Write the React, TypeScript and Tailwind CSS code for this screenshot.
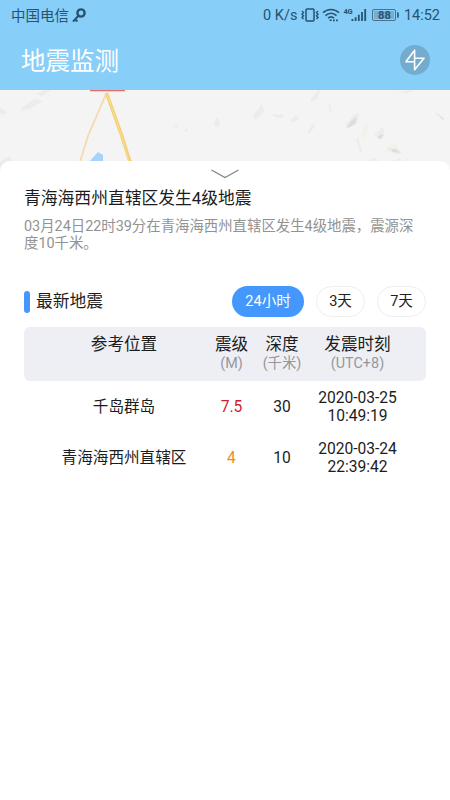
import React from "react";

interface Quake {
  place: string;
  magnitude: string;
  magnitudeClass: string;
  depth: string;
  date: string;
  time: string;
}

const quakes: Quake[] = [
  {
    place: "千岛群岛",
    magnitude: "7.5",
    magnitudeClass: "text-[#d0202c]",
    depth: "30",
    date: "2020-03-25",
    time: "10:49:19",
  },
  {
    place: "青海海西州直辖区",
    magnitude: "4",
    magnitudeClass: "text-[#f08a24]",
    depth: "10",
    date: "2020-03-24",
    time: "22:39:42",
  },
];

const columns = [
  { label: "参考位置", unit: "" },
  { label: "震级", unit: "(M)" },
  { label: "深度", unit: "(千米)" },
  { label: "发震时刻", unit: "(UTC+8)" },
];

const GRID = "grid grid-cols-[164px_51px_50px_101px] px-[18px] text-center";

const StatusBar: React.FC = () => (
  <div className="flex h-8 items-center pl-[11px] pr-[10px] text-[14.5px] leading-none text-[#27536f]">
    <span className="pt-[2px]">中国电信</span>
    {/* Key */}
    <svg className="ml-[3px] mb-[2px]" width="14" height="15" viewBox="0 0 14 15" fill="none" stroke="currentColor">
      <circle cx="9" cy="5" r="3.6" strokeWidth="2.4" />
      <path d="M6.5 7.8L1 13.6M3 11.2l2.4 2.2" strokeWidth="2" />
    </svg>
    <span className="ml-auto pt-px">0 K/s</span>
    {/* Vibrate */}
    <svg className="ml-[4px] mb-[2px]" width="18" height="14" viewBox="0 0 18 14" fill="none" stroke="currentColor">
      <rect x="5" y="1" width="8" height="12" rx="1" strokeWidth="1.5" />
      <path d="M1 3l1.5 1.6L1 6.2l1.5 1.6L1 9.4 2.5 11M17 3l-1.5 1.6L17 6.2l-1.5 1.6L17 9.4 15.5 11" strokeWidth="1.4" />
    </svg>
    {/* Wi-Fi */}
    <svg className="ml-[3px] mb-[2px]" width="18" height="14" viewBox="0 0 18 14" fill="none" stroke="currentColor" strokeWidth="1.6">
      <path d="M1 4.8c4.5-4.4 11.5-4.4 16 0M3.5 7.6c3.2-3.1 7.8-3.1 11 0M6 10.2c1.8-1.6 4.2-1.6 6 0" />
      <path d="M7.5 12.2h2.2M11 12.4h1.800M14 12.4h1.800" />
    </svg>
    {/* 4G signal */}
    <span className="ml-[3px] mb-[9px] w-[9px] text-[7.5px] font-bold tracking-tight">4G</span>
    <svg className="-ml-px mb-[2px]" width="16" height="14" viewBox="0 0 16 14" fill="currentColor">
      <path d="M.5 11h1.8v2H.5zM3.7 9.2h1.8V13H3.7zM6.9 6.8h1.8V13H6.9zM10.1 4h1.8v9h-1.8zM13.3 1h1.8v12h-1.8z" />
    </svg>
    {/* Battery */}
    <div className="ml-[5px] mb-[2px] flex h-[12px] w-[24px] items-center justify-center rounded-[2px] border border-[#47718c] p-px">
      <span className="flex h-full w-full items-center justify-center bg-[#76aecf] text-[11px] font-bold">88</span>
    </div>
    <span className="ml-px mb-[2px] h-[6px] w-[1.5px] rounded-r-sm bg-[#3d6883]" />
    <span className="ml-[5px] pt-px">14:52</span>
  </div>
);

const Header: React.FC = () => (
  <header className="h-[90px] bg-[#87cef8]">
    <StatusBar />
    <div className="flex h-[56px] items-center justify-between pl-[21px] pr-5">
      <h1 className="pt-[5px] text-[24.5px] leading-none text-white">地震监测</h1>
      <button className="flex h-[30px] w-[30px] items-center justify-center rounded-full bg-[#74acce]">
        <svg width="20" height="22" viewBox="0 0 20 22" fill="none" stroke="#fff" strokeWidth="1.6" strokeLinejoin="round">
          <path d="M9.6 12.8H.9L9.6 1.2v19.6L19 9.2H9.6" />
        </svg>
      </button>
    </div>
  </header>
);

const MapStrip: React.FC = () => (
  <svg className="block h-[86px] w-full bg-[#f4f4f4]" viewBox="0 0 450 86">
    {/* Terrain */}
    <g fill="#e9e9e9" opacity="0.7">
      <path d="M21 18l14-9 8 2-12 7-9 3zM36 4l9-4h6l-9 6zM0 18l7 4-3 3-4-2zM0 72l9-6 3 4-8 8-4 2z" />
      <path d="M172 37l4-3 3 4zM184 41l3-3 1 4zM213 35l4-8 3 6-2 4zM253 26l6-8 3-4 2 7-8 9zM271 24l13 1-2 3-7-1zM290 31l6-6 3 4-6 3zM308 41l5-7 2 2-6 8zM311 9l7-9h2l-2 9-7 3z" />
      <path d="M329 10l2 10 4 4-6-4zM346 34l8-9 5-2-2 10-10 6zM358 47l4 14-2 1-4-12zM374 45l8-8 3 5-7 5zM386 57l12 1 4 6-9-1zM366 72l8-4 6 4-7 4zM389 72l12-4-2 6zM399 2l14-2-2 2-7 1z" />
    </g>
    <g fill="#dedede">
      <path d="M347 37l5-7 5-3-2 7-7 4zM377 48l4-4 3 1-3 4zM388 59l8 0 4 4-7-1zM434 21l10 8-1 1z" />
    </g>
    <path d="M386 62l10-8M367 32l-4 16M409 70l-8 4" stroke="#f3f0df" strokeWidth="5" opacity="0.5" />
    {/* Lake */}
    <path d="M88 73l10-11 5 3v8z" fill="#a5d3fa" />
    {/* Roads */}
    <path d="M106.500 3L88 46l-8 26" fill="none" stroke="#f2dcab" strokeWidth="1.8" />
    <path d="M106.500 3l15 42 8.500 27" fill="none" stroke="#f2cf73" strokeWidth="3.4" />
    <path d="M107 4l14 40 8 28" fill="none" stroke="#f8dd8b" strokeWidth="1.200" />
    <path d="M90 .500h35" stroke="#e46f67" strokeWidth="1.500" />
  </svg>
);

const RangeTabs: React.FC = () => (
  <div className="flex gap-3 text-[14.5px] leading-none">
    <button className="h-[31px] w-[72px] rounded-full bg-[#4397fd] pt-[2px] text-white">24小时</button>
    <button className="h-[31px] w-[49px] rounded-full border border-[#eeeeee] pt-[2px] text-[#222]">3天</button>
    <button className="h-[31px] w-[49px] rounded-full border border-[#eeeeee] pt-[2px] text-[#222]">7天</button>
  </div>
);

const QuakeTable: React.FC = () => (
  <div className="mt-[10px]">
    <div className={`${GRID} h-[54px] rounded-md bg-[#eeeff4] pt-[8px]`}>
      {columns.map((column) => (
        <div key={column.label} className="whitespace-nowrap">
          <div className="text-[16.6px] leading-[19px] text-[#1c1c1e]">{column.label}</div>
          <div className="text-[14.4px] leading-[19px] text-[#97979b]">{column.unit}</div>
        </div>
      ))}
    </div>
    {quakes.map((quake) => (
      <div key={quake.time} className={`${GRID} h-[51px] items-center pt-[2px] text-[15.6px] leading-[17.5px] text-[#1c1c1e]`}>
        <div className="whitespace-nowrap">{quake.place}</div>
        <div className={quake.magnitudeClass}>{quake.magnitude}</div>
        <div>{quake.depth}</div>
        <div>
          {quake.date}
          <br />
          {quake.time}
        </div>
      </div>
    ))}
  </div>
);

const App: React.FC = () => {
  return (
    <div className="flex h-[800px] w-[450px] flex-col overflow-hidden bg-white font-['Roboto','Noto_Sans_CJK_SC',sans-serif]">
      <Header />
      <MapStrip />
      <main className="relative -mt-[15px] flex-1 rounded-t-[10px] bg-white px-6">
        <svg className="mx-auto mt-[8px] block" width="28" height="10" viewBox="0 0 28 10" fill="none" stroke="#858585" strokeWidth="1.3">
          <path d="M.5 1L14 8.500 27.500 1" />
        </svg>
        <h2 className="mt-[9px] text-[16.8px] leading-[20px] text-[#1c1c1e]">青海海西州直辖区发生4级地震</h2>
        <p className="mt-[11px] w-[394px] text-[14.4px] leading-[16.5px] text-[#929292]">
          03月24日22时39分在青海海西州直辖区发生4级地震，震源深度10千米。
        </p>
        <div className="mt-[34px] flex items-center justify-between">
          <div className="flex items-center gap-[6px]">
            <span className="h-[22px] w-[6px] rounded-[3px] bg-[#4397fd]" />
            <h3 className="text-[16.8px] leading-none text-[#1c1c1e]">最新地震</h3>
          </div>
          <RangeTabs />
        </div>
        <QuakeTable />
      </main>
    </div>
  );
};

export default App;
